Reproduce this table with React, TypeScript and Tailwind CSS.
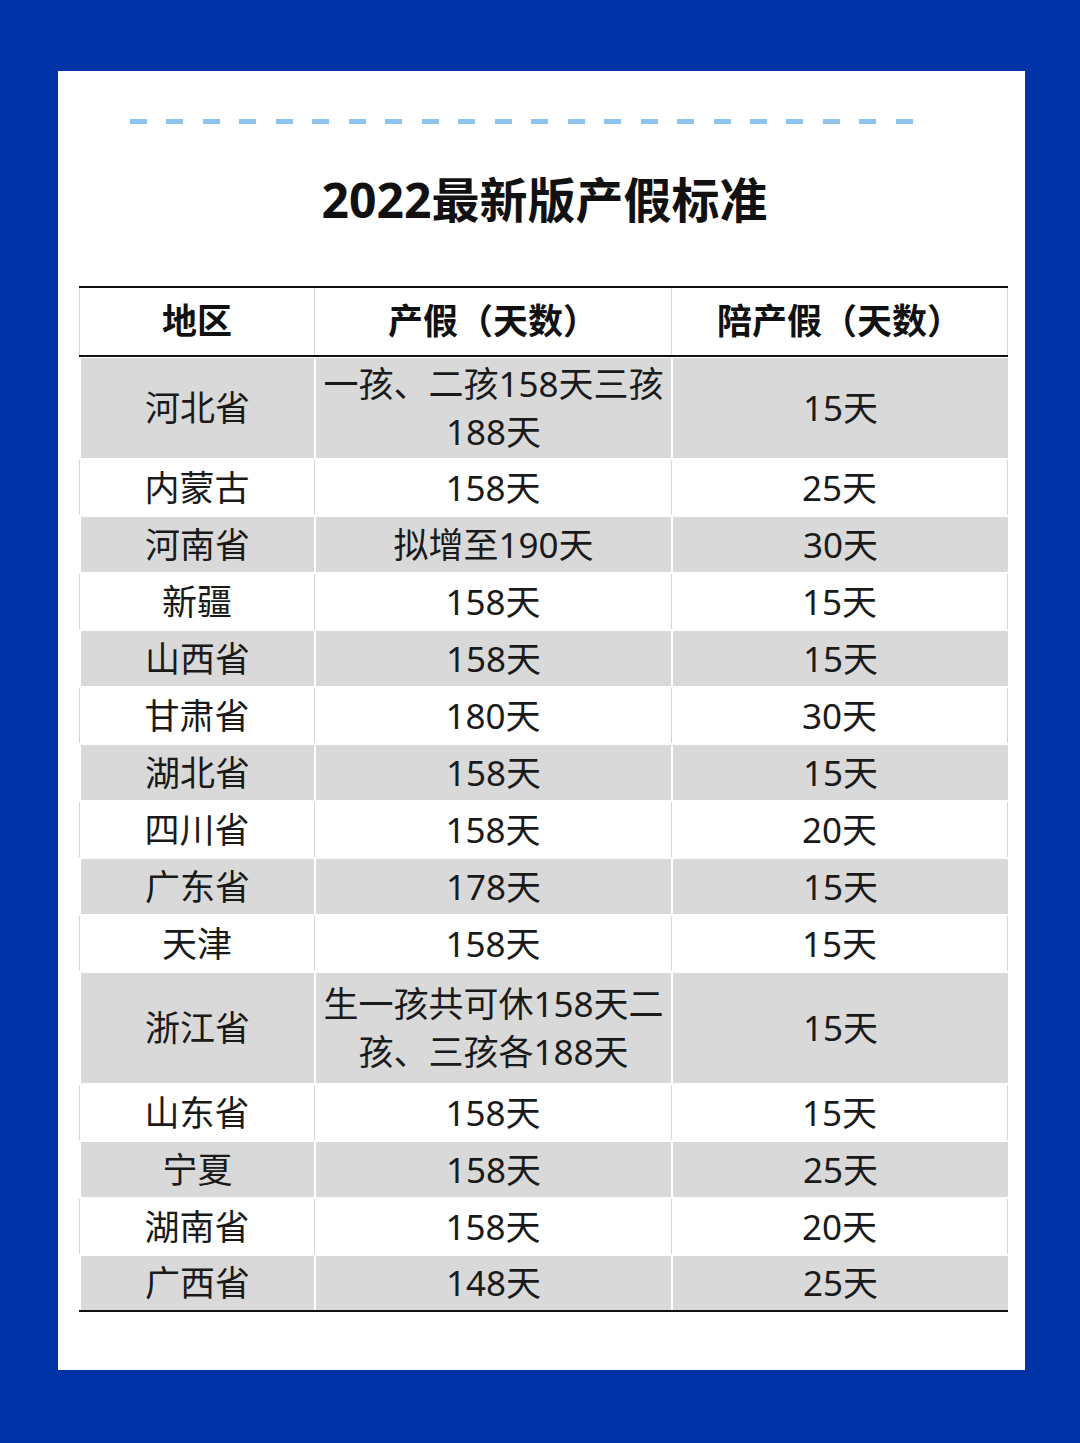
import React from "react";

// 2022 maternity / paternity leave table, one row per province.
type Row = {
  region: string;
  leave: string[];
  paternity: string;
  h: string;
};

const rows: Row[] = [
  { region: "河北省", leave: ["一孩、二孩158天三孩", "188天"], paternity: "15天", h: "h-[100px]" },
  { region: "内蒙古", leave: ["158天"], paternity: "25天", h: "h-[55px]" },
  { region: "河南省", leave: ["拟增至190天"], paternity: "30天", h: "h-[55px]" },
  { region: "新疆", leave: ["158天"], paternity: "15天", h: "h-[55px]" },
  { region: "山西省", leave: ["158天"], paternity: "15天", h: "h-[55px]" },
  { region: "甘肃省", leave: ["180天"], paternity: "30天", h: "h-[55px]" },
  { region: "湖北省", leave: ["158天"], paternity: "15天", h: "h-[55px]" },
  { region: "四川省", leave: ["158天"], paternity: "20天", h: "h-[55px]" },
  { region: "广东省", leave: ["178天"], paternity: "15天", h: "h-[55px]" },
  { region: "天津", leave: ["158天"], paternity: "15天", h: "h-[55px]" },
  { region: "浙江省", leave: ["生一孩共可休158天二", "孩、三孩各188天"], paternity: "15天", h: "h-[110px]" },
  { region: "山东省", leave: ["158天"], paternity: "15天", h: "h-[55px]" },
  { region: "宁夏", leave: ["158天"], paternity: "25天", h: "h-[55px]" },
  { region: "湖南省", leave: ["158天"], paternity: "20天", h: "h-[55px]" },
  { region: "广西省", leave: ["148天"], paternity: "25天", h: "h-[54px]" },
];

const dashes = Array.from({ length: 22 });

function Cell({
  children,
  shaded,
  last,
}: {
  children: React.ReactNode;
  shaded: boolean;
  last?: boolean;
}) {
  return (
    <div
      className={`flex flex-col items-center justify-center text-center ${
        shaded
          ? "bg-[#d9d9d9] border-l-2 border-white"
          : `bg-white border-l border-[#d6d6d6] ${last ? "border-r" : ""}`
      }`}
    >
      {children}
    </div>
  );
}

export default function App() {
  return (
    <div
      className="w-[1080px] h-[1443px] bg-[#0032a8] pt-[71px] pl-[58px]"
      style={{ fontFamily: '"Noto Sans", "Noto Sans CJK SC", sans-serif' }}
    >
      <div className="w-[967px] h-[1299px] bg-white pt-[48px]">
        {/* dashed rule */}
        <div className="ml-[72px] w-[783px] flex justify-between">
          {dashes.map((_, i) => (
            <span key={i} className="block w-[17px] h-[5px] bg-[#8ec3ee]" />
          ))}
        </div>

        <h1 className="mt-[52px] text-center text-[48px] leading-[48px] font-bold text-[#111] pl-[6px]">
          2022最新版产假标准
        </h1>

        {/* table */}
        <div className="mt-[62px] ml-[21px] w-[929px] border-t-2 border-b-2 border-[#111]">
          <div className="grid grid-cols-[235px_357px_337px] h-[69px] border-b-2 border-[#111] text-[35px] font-bold text-[#111]">
            <div className="flex items-center justify-center border-l border-[#d6d6d6]">地区</div>
            <div className="flex items-center justify-center border-l border-[#d6d6d6]">产假（天数）</div>
            <div className="flex items-center justify-center border-l border-r border-[#d6d6d6]">陪产假（天数）</div>
          </div>

          <div className="flex flex-col gap-[2px] pt-[1px] text-[35px] leading-[48px] text-[#1a1a1a]">
            {rows.map((r, i) => {
              const shaded = i % 2 === 0;
              return (
                <div key={r.region} className={`grid grid-cols-[235px_357px_337px] ${r.h}`}>
                  <Cell shaded={shaded}>{r.region}</Cell>
                  <Cell shaded={shaded}>
                    {r.leave.map((l) => (
                      <span key={l} className="block whitespace-nowrap">
                        {l}
                      </span>
                    ))}
                  </Cell>
                  <Cell shaded={shaded} last>
                    {r.paternity}
                  </Cell>
                </div>
              );
            })}
          </div>
        </div>
      </div>
    </div>
  );
}
